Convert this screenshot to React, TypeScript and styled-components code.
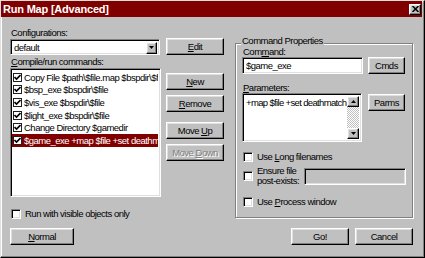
import React from 'react';
import styled, { createGlobalStyle, css } from 'styled-components';

const GlobalStyle = createGlobalStyle`
  html, body {
    margin: 0;
    padding: 0;
    background: #c0c0c0;
    overflow: hidden;
  }
  body {
    font-family: "Liberation Sans", Arial, sans-serif;
    font-size: 9.5px;
    letter-spacing: -0.5px;
    color: #000;
  }
  * { box-sizing: border-box; }
`;

const raised = css`
  border: 1px solid;
  border-color: #fff #000 #000 #fff;
  box-shadow: inset -1px -1px #808080, inset 1px 1px #dfdfdf;
  background: #c0c0c0;
`;

const sunken = css`
  border: 1px solid;
  border-color: #808080 #fff #fff #808080;
  box-shadow: inset 1px 1px #000, inset -1px -1px #dfdfdf;
  background: #fff;
`;

const Window = styled.div`
  width: 425px;
  height: 258px;
  background: #c0c0c0;
  border: 1px solid;
  border-color: #dfdfdf #000 #000 #dfdfdf;
  box-shadow: inset -1px -1px #808080, inset 1px 1px #fff;
  padding: 0 2px 2px 0;
  display: flex;
  flex-direction: column;
`;

const TitleBar = styled.div`
  height: 16px;
  background: #800000;
  display: flex;
  align-items: center;
  justify-content: space-between;
  padding: 0 1px 0 2px;
`;

const TitleText = styled.span`
  color: #fff;
  font-weight: bold;
  font-size: 11px;
  letter-spacing: -0.2px;
  line-height: 16px;
`;

const CloseBox = styled.div`
  ${raised}
  width: 12px;
  height: 11px;
  display: flex;
  align-items: center;
  justify-content: center;
`;

const Body = styled.div`
  padding: 10px 0 0 9px;
  display: grid;
  grid-template-columns: 214px 178px;
  column-gap: 11px;
`;

const Column = styled.div`
  display: flex;
  flex-direction: column;
`;

const Label = styled.div<{ $top?: number; $lh?: number }>`
  line-height: ${p => p.$lh ?? 11}px;
  height: ${p => p.$lh ?? 11}px;
  margin-top: ${p => p.$top ?? 0}px;
  padding-left: 1px;
  white-space: nowrap;
`;

const Row = styled.div<{ $gap: number; $top?: number; $h?: number; $align?: string }>`
  display: flex;
  gap: ${p => p.$gap}px;
  margin-top: ${p => p.$top ?? 0}px;
  height: ${p => (p.$h ? `${p.$h}px` : 'auto')};
  align-items: ${p => p.$align ?? 'flex-start'};
`;

const Button = styled.div<{ $w: number; $top?: number; $disabled?: boolean }>`
  ${raised}
  width: ${p => p.$w}px;
  height: 17px;
  flex: none;
  margin-top: ${p => p.$top ?? 0}px;
  display: flex;
  align-items: center;
  justify-content: center;
  line-height: 12px;
  white-space: nowrap;
  ${p =>
    p.$disabled &&
    css`
      color: #808080;
      text-shadow: 1px 1px #fff;
    `}
`;

const Combo = styled.div`
  ${sunken}
  width: 150px;
  height: 16px;
  display: flex;
  padding: 2px;
`;

const ComboText = styled.div`
  flex: 1;
  padding-left: 1px;
  line-height: 12px;
`;

const ArrowButton = styled.div<{ $h: number; $w?: number }>`
  ${raised}
  width: ${p => p.$w ?? 11}px;
  height: ${p => p.$h}px;
  flex: none;
  display: flex;
  align-items: center;
  justify-content: center;
`;

const ListBox = styled.div`
  ${sunken}
  width: 151px;
  height: 129px;
  padding: 2px 2px 2px 1px;
  overflow: hidden;
  flex: none;
`;

const ListItem = styled.div<{ $selected?: boolean }>`
  height: 12.6px;
  display: flex;
  align-items: center;
  gap: 2px;
  padding-left: 1px;
  white-space: nowrap;
  overflow: hidden;
  background: ${p => (p.$selected ? '#800000' : 'transparent')};
  color: ${p => (p.$selected ? '#fff' : '#000')};
`;

const ItemCheck = styled.div`
  width: 9px;
  height: 9px;
  flex: none;
  background: #fff;
  border: 1px solid #202020;
  display: flex;
  align-items: center;
  justify-content: center;
`;

const ButtonStack = styled.div`
  display: flex;
  flex-direction: column;
`;

const CheckRow = styled.div<{ $top: number; $h?: number }>`
  display: flex;
  align-items: center;
  gap: 4px;
  margin-top: ${p => p.$top}px;
  height: ${p => p.$h ?? 11}px;
  padding-left: 1px;
  white-space: nowrap;
`;

const CheckBox = styled.div`
  ${sunken}
  width: 10px;
  height: 10px;
  flex: none;
`;

const GroupBox = styled.div`
  margin-top: 16px;
  border: 1px solid #808080;
  box-shadow: inset 1px 1px #fff, 1px 1px #fff;
  padding: 0 6px 9px 6px;
  height: 175px;
`;

const Legend = styled.div`
  width: fit-content;
  margin: -9px 0 0 -1px;
  padding: 0 1px;
  background: #c0c0c0;
  line-height: 11px;
`;

const TextBox = styled.div<{ $w: number; $h: number; $blank?: boolean }>`
  ${sunken}
  width: ${p => p.$w}px;
  height: ${p => p.$h}px;
  flex: none;
  padding: 2px 3px;
  line-height: 12px;
  white-space: nowrap;
  overflow: hidden;
  ${p => p.$blank && 'background: #c0c0c0;'}
`;

const Memo = styled.div`
  ${sunken}
  width: 120px;
  height: 49px;
  flex: none;
  padding: 2px;
  display: flex;
`;

const MemoText = styled.div`
  flex: 1;
  padding: 1px 0 0 1px;
  line-height: 12px;
  letter-spacing: -0.65px;
  white-space: nowrap;
  overflow: hidden;
`;

const ScrollBar = styled.div`
  width: 12px;
  display: flex;
  flex-direction: column;
`;

const Track = styled.div`
  flex: 1;
  background-image: conic-gradient(#fff 25%, #c0c0c0 0 50%, #fff 0 75%, #c0c0c0 0);
  background-size: 2px 2px;
`;

const TwoLine = styled.div`
  line-height: 10px;
  width: 43px;
  flex: none;
  white-space: nowrap;
`;

const Footer = styled.div`
  display: flex;
  padding: 9px 0 0 9px;
`;

const FooterRight = styled.div`
  display: flex;
  gap: 6px;
  margin-left: auto;
  margin-right: 9px;
`;

const Check = ({ color = '#000' }: { color?: string }) => (
  <svg width="7" height="7" viewBox="0 0 7 7">
    <path d="M0.5 3 L2.5 5 L6.5 1" stroke={color} strokeWidth="1.6" fill="none" />
  </svg>
);

const Arrow = ({ up }: { up?: boolean }) => (
  <svg width="5" height="3" viewBox="0 0 5 3">
    <path d={up ? 'M0 3 H5 L2.5 0 Z' : 'M0 0 H5 L2.5 3 Z'} fill="#000" />
  </svg>
);

const commands = [
  'Copy File $path\\$file.map $bspdir\\$file',
  '$bsp_exe $bspdir\\$file',
  '$vis_exe $bspdir\\$file',
  '$light_exe $bspdir\\$file',
  'Change Directory $gamedir',
  '$game_exe +map $file +set deathmatch 1',
];

export default function App() {
  return (
    <>
      <GlobalStyle />
      <Window>
        <TitleBar>
          <TitleText>Run Map [Advanced]</TitleText>
          <CloseBox>
            <svg width="7" height="6" viewBox="0 0 7 6">
              <path d="M0.5 0 L6.5 6 M6.5 0 L0.5 6" stroke="#000" strokeWidth="1.5" />
            </svg>
          </CloseBox>
        </TitleBar>
        <Body>
          <Column>
            <Label>Configurations:</Label>
            <Row $gap={6} $h={17} $align="center">
              <Combo>
                <ComboText>default</ComboText>
                <ArrowButton $h={12}>
                  <Arrow />
                </ArrowButton>
              </Combo>
              <Button $w={58}>
                <span><u>E</u>dit</span>
              </Button>
            </Row>
            <Label $top={1} $lh={12}>
              <u>C</u>ompile/run commands:
            </Label>
            <Row $gap={5}>
              <ListBox>
                {commands.map((c, i) => (
                  <ListItem key={c} $selected={i === commands.length - 1}>
                    <ItemCheck>
                      <Check />
                    </ItemCheck>
                    <span>{c}</span>
                  </ListItem>
                ))}
              </ListBox>
              <ButtonStack>
                <Button $w={58} $top={5}>
                  <span><u>N</u>ew</span>
                </Button>
                <Button $w={58} $top={5}>
                  <span><u>R</u>emove</span>
                </Button>
                <Button $w={58} $top={10}>
                  <span>Move <u>U</u>p</span>
                </Button>
                <Button $w={58} $top={5} $disabled>
                  <span>Move <u>D</u>own</span>
                </Button>
              </ButtonStack>
            </Row>
            <CheckRow $top={11}>
              <CheckBox />
              <span>Run with visible objects only</span>
            </CheckRow>
          </Column>

          <GroupBox>
            <Legend>Command Properties</Legend>
            <Label>
              Com<u>m</u>and:
            </Label>
            <Row $gap={5}>
              <TextBox $w={121} $h={17}>$game_exe</TextBox>
              <Button $w={37}>Cmds</Button>
            </Row>
            <Label $top={8}>
              <u>P</u>arameters:
            </Label>
            <Row $gap={6}>
              <Memo>
                <MemoText>+map $file +set deathmatch</MemoText>
                <ScrollBar>
                  <ArrowButton $h={11} $w={12}>
                    <Arrow up />
                  </ArrowButton>
                  <Track />
                  <ArrowButton $h={11} $w={12}>
                    <Arrow />
                  </ArrowButton>
                </ScrollBar>
              </Memo>
              <Button $w={37} $top={1}>Parms</Button>
            </Row>
            <CheckRow $top={9}>
              <CheckBox />
              <span>Use <u>L</u>ong filenames</span>
            </CheckRow>
            <CheckRow $top={5} $h={18}>
              <CheckBox />
              <TwoLine>
                Ensure file
                <br />
                post-exists:
              </TwoLine>
              <TextBox $w={102} $h={17} $blank />
            </CheckRow>
            <CheckRow $top={11}>
              <CheckBox />
              <span>Use <u>P</u>rocess window</span>
            </CheckRow>
          </GroupBox>
        </Body>
        <Footer>
          <Button $w={64}>
            <span><u>N</u>ormal</span>
          </Button>
          <FooterRight>
            <Button $w={58}>Go!</Button>
            <Button $w={58}>Cancel</Button>
          </FooterRight>
        </Footer>
      </Window>
    </>
  );
}
